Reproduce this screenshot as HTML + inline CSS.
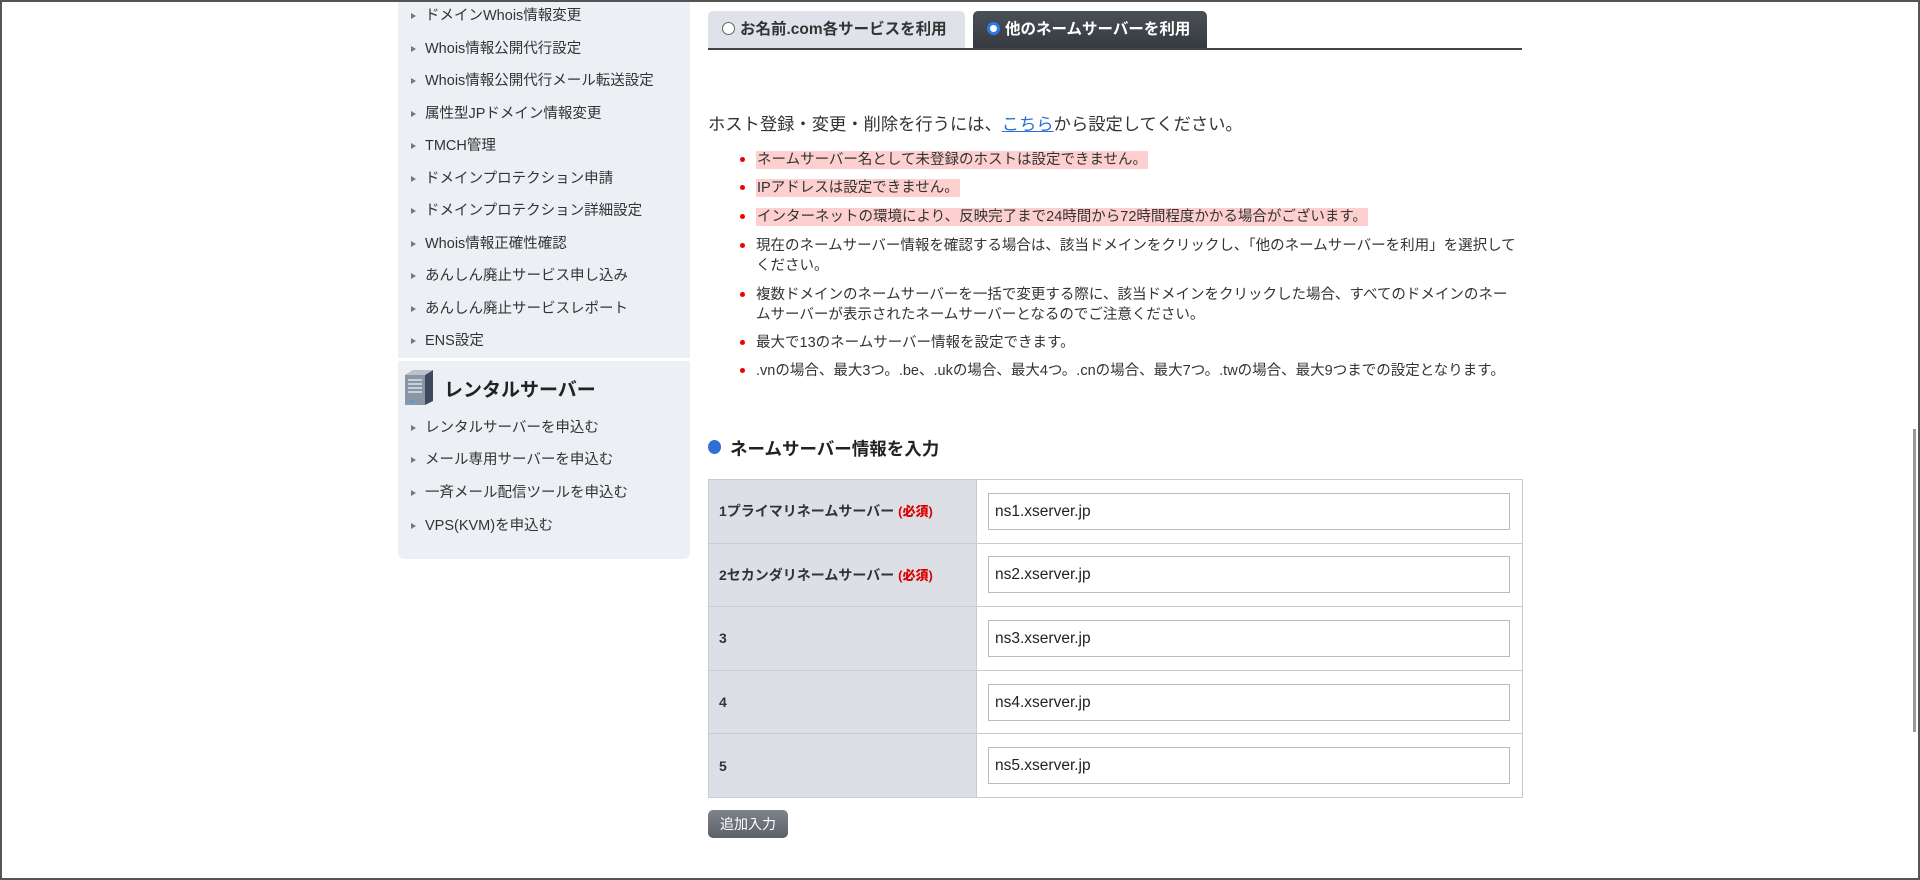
<!DOCTYPE html>
<html><head><meta charset="utf-8">
<style>
*{margin:0;padding:0;box-sizing:border-box}
html,body{width:1920px;height:880px;overflow:hidden;background:#fff}
body{font-family:"Liberation Sans","Noto Sans CJK JP",sans-serif;color:#333;position:relative}
.frame{position:absolute;left:0;top:0;width:1920px;height:880px;border:2px solid #555}
.side{position:absolute;left:398px;top:0;width:292px;height:559px;background:#eceff4;border-radius:0 0 6px 6px}
.sep{position:absolute;left:398px;top:358px;width:292px;height:3px;background:#fff}
.si{position:absolute;left:425px;font-size:14.5px;color:#333;white-space:nowrap;line-height:18px}
.si:before{content:"";position:absolute;left:-14px;top:6px;border-left:5px solid #777;border-top:3px solid transparent;border-bottom:3px solid transparent}
.rt{position:absolute;left:444px;top:375px;font-size:19px;font-weight:bold;color:#222}
.tab{position:absolute;top:11px;height:38px;border-radius:5px 5px 0 0;font-size:15.5px;font-weight:bold;line-height:38px;white-space:nowrap}
.t1{left:708px;width:257px;background:#dfe2e8;color:#333;padding-left:14px}
.t2{left:973px;width:234px;background:linear-gradient(#4a5056,#353a40);color:#fff;padding-left:14px}
.rad{display:inline-block;width:13px;height:13px;border-radius:50%;vertical-align:-1px;margin-right:5px}
.tline{position:absolute;left:708px;top:48px;width:814px;height:2px;background:#444}
.host{position:absolute;left:708px;top:110px;font-size:17.3px;color:#333;white-space:nowrap}
.host a{color:#2a6fd6;text-decoration:underline}
.li{position:absolute;left:756px;font-size:14.5px;line-height:19.5px;color:#333;width:762px}
.li:before{content:"";position:absolute;left:-16px;top:6px;width:5px;height:5px;border-radius:50%;background:#e00}
.pk{background:#fdd0cf;padding:1px 1px}
.h2{position:absolute;left:730px;top:436px;font-size:17.5px;font-weight:bold;color:#222}
.dot{position:absolute;left:708px;top:440px;width:13px;height:14px;border-radius:50%;background:#2f6fd6}
table{position:absolute;left:708px;top:479px;width:815px;border-collapse:collapse}
td{border:1px solid #c8ccd2;height:63.6px}
td.l{width:268px;background:#dce0e6;font-size:14px;font-weight:bold;color:#333;padding-left:10px}
td.l b{color:#d00;font-size:13px}
td.r{padding-left:11px}
.in{width:522px;height:37px;border:1px solid #bbb;font-size:15.5px;line-height:35px;padding-left:6px;color:#222;background:#fff}
.btn{position:absolute;left:708px;top:810px;width:80px;height:28px;border-radius:5px;background:linear-gradient(#7d828b,#5c616a);color:#fff;font-size:14px;line-height:28px;text-align:center}
.sb{position:absolute;left:1913px;top:429px;width:3px;height:303px;background:#999}
</style></head><body>
<div class="side"></div>
<div class="sep"></div>
<div class="si" style="top:7px">ドメインWhois情報変更</div>
<div class="si" style="top:40px">Whois情報公開代行設定</div>
<div class="si" style="top:72px">Whois情報公開代行メール転送設定</div>
<div class="si" style="top:105px">属性型JPドメイン情報変更</div>
<div class="si" style="top:137px">TMCH管理</div>
<div class="si" style="top:170px">ドメインプロテクション申請</div>
<div class="si" style="top:202px">ドメインプロテクション詳細設定</div>
<div class="si" style="top:235px">Whois情報正確性確認</div>
<div class="si" style="top:267px">あんしん廃止サービス申し込み</div>
<div class="si" style="top:300px">あんしん廃止サービスレポート</div>
<div class="si" style="top:332px">ENS設定</div>
<svg style="position:absolute;left:403px;top:369px" width="32" height="36" viewBox="0 0 32 36">
<path d="M2 6 L22 6 L22 36 L2 36 Z" fill="#8a95a5"/>
<path d="M22 6 L30 1 L30 32 L22 36 Z" fill="#3d4a5e"/>
<path d="M2 6 L10 1 L30 1 L22 6 Z" fill="#b8c1cc"/>
<g stroke="#dde3ea" stroke-width="1.5"><line x1="5" y1="11" x2="19" y2="11"/><line x1="5" y1="15" x2="19" y2="15"/><line x1="5" y1="19" x2="19" y2="19"/><line x1="5" y1="23" x2="19" y2="23"/></g>
<rect x="7" y="31" width="3" height="3" fill="#3aa0f0"/>
</svg>
<div class="rt">レンタルサーバー</div>
<div class="si" style="top:419px">レンタルサーバーを申込む</div>
<div class="si" style="top:451px">メール専用サーバーを申込む</div>
<div class="si" style="top:484px">一斉メール配信ツールを申込む</div>
<div class="si" style="top:517px">VPS(KVM)を申込む</div>

<div class="tab t1"><span class="rad" style="border:1.5px solid #666;background:#fff"></span>お名前.com各サービスを利用</div>
<div class="tab t2"><span class="rad" style="border:3px solid #2b7bf0;background:#fff"></span>他のネームサーバーを利用</div>
<div class="tline"></div>

<div class="host">ホスト登録・変更・削除を行うには、<a>こちら</a>から設定してください。</div>
<div class="li" style="top:151px"><span class="pk">ネームサーバー名として未登録のホストは設定できません。</span></div>
<div class="li" style="top:179px"><span class="pk">IPアドレスは設定できません。</span></div>
<div class="li" style="top:208px"><span class="pk">インターネットの環境により、反映完了まで24時間から72時間程度かかる場合がございます。</span></div>
<div class="li" style="top:237px">現在のネームサーバー情報を確認する場合は、該当ドメインをクリックし、「他のネームサーバーを利用」を選択してください。</div>
<div class="li" style="top:286px">複数ドメインのネームサーバーを一括で変更する際に、該当ドメインをクリックした場合、すべてのドメインのネームサーバーが表示されたネームサーバーとなるのでご注意ください。</div>
<div class="li" style="top:334px">最大で13のネームサーバー情報を設定できます。</div>
<div class="li" style="top:362px">.vnの場合、最大3つ。.be、.ukの場合、最大4つ。.cnの場合、最大7つ。.twの場合、最大9つまでの設定となります。</div>

<div class="dot"></div>
<div class="h2">ネームサーバー情報を入力</div>
<table>
<tr><td class="l">1プライマリネームサーバー <b>(必須)</b></td><td class="r"><div class="in">ns1.xserver.jp</div></td></tr>
<tr><td class="l">2セカンダリネームサーバー <b>(必須)</b></td><td class="r"><div class="in">ns2.xserver.jp</div></td></tr>
<tr><td class="l">3</td><td class="r"><div class="in">ns3.xserver.jp</div></td></tr>
<tr><td class="l">4</td><td class="r"><div class="in">ns4.xserver.jp</div></td></tr>
<tr><td class="l">5</td><td class="r"><div class="in">ns5.xserver.jp</div></td></tr>
</table>
<div class="btn">追加入力</div>
<div class="sb"></div>
<div class="frame"></div>
</body></html>
